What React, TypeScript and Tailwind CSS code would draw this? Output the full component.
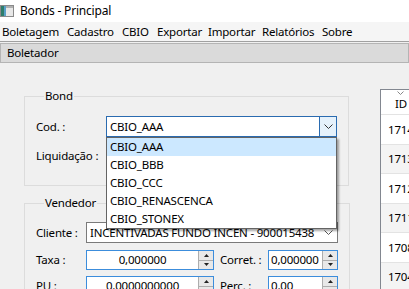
import React from "react";

const menus = [
  { label: "Boletagem", w: "w-[65px]" },
  { label: "Cadastro", w: "w-[55px]" },
  { label: "CBIO", w: "w-[35px]" },
  { label: "Exportar", w: "w-[51px]" },
  { label: "Importar", w: "w-[54px]" },
  { label: "Relatórios", w: "w-[60px]" },
  { label: "Sobre", w: "w-[40px]" },
];

const options = ["CBIO_AAA", "CBIO_BBB", "CBIO_CCC", "CBIO_RENASCENCA", "CBIO_STONEX"];

const rows = ["1714", "1713", "1712", "1711", "1708", "1704"];

const Chevron = ({ color = "#333" }: { color?: string }) => (
  <svg width="9" height="6" viewBox="0 0 9 6">
    <path d="M0.5 0.5 L4.5 4.5 L8.5 0.5" fill="none" stroke={color} strokeWidth="1" />
  </svg>
);

const Spinner = () => (
  <div className="flex flex-col w-[15px] h-full border-l border-[#adadad]">
    <div className="flex-1 flex items-center justify-center bg-[#e8e8e8] border-b border-[#adadad]">
      <svg width="5" height="3" viewBox="0 0 5 3">
        <path d="M0 3 L2.5 0 L5 3 Z" fill="#222" />
      </svg>
    </div>
    <div className="flex-1 flex items-center justify-center bg-[#e8e8e8]">
      <svg width="5" height="3" viewBox="0 0 5 3">
        <path d="M0 0 L2.5 3 L5 0 Z" fill="#222" />
      </svg>
    </div>
  </div>
);

const NumInput = ({ value, w, align }: { value: string; w: string; align: string }) => (
  <div className={`flex h-[20px] shrink-0 ${w} bg-white border border-[#3c8ddc]`}>
    <div className={`flex-1 flex items-center px-[2px] whitespace-nowrap overflow-hidden ${align}`}>{value}</div>
    <Spinner />
  </div>
);

export default function App() {
  return (
    <div
      className="relative w-[409px] h-[289px] overflow-hidden bg-[#f0f0f0] text-[11.5px] tracking-[-0.2px] text-black leading-[16px]"
      style={{ fontFamily: '"Noto Sans", "Open Sans", sans-serif' }}
    >
      {/* title bar */}
      <div className="h-[22px] bg-white flex items-center">
        <svg width="14" height="12" viewBox="0 0 14 12" className="mr-[6px]">
          <rect x="0.5" y="0.5" width="13" height="11" fill="#e8e8e8" stroke="#8a8a8a" />
          <rect x="1" y="1" width="3" height="10" fill="#2e7d6b" />
          <rect x="4" y="1" width="2" height="10" fill="#5aa0c8" />
          <rect x="6" y="1" width="7" height="2" fill="#b0b0b0" />
        </svg>
        <span className="text-[12px]">Bonds - Principal</span>
      </div>

      {/* menu bar */}
      <div className="h-[19px] flex items-center pl-[2px] bg-[#f5f5f5]">
        {menus.map((m) => (
          <div key={m.label} className={`${m.w} shrink-0 whitespace-nowrap`}>
            {m.label}
          </div>
        ))}
      </div>
      <div className="h-[2px] border-t border-[#a0a0a0] bg-[#f0f0f0]" />

      {/* tool strip */}
      <div className="h-[20px] bg-[#dadada] border border-[#b4b4b4] flex items-center pl-[6px]">
        Boletador
      </div>

      {/* body */}
      <div className="flex pl-[24px]">
        <div className="w-[325px] shrink-0 flex flex-col">
          <fieldset className="mt-[25px] h-[98px] border border-[#dcdcdc] pl-[11px] pr-[11px]">
            <legend className="ml-[8px] px-[1px]">Bond</legend>
            <div className="mt-[12px] flex items-center h-[21px]">
              <div className="w-[70px]">Cod. :</div>
              <div className="flex-1 h-[21px] flex bg-white border border-[#2a6bb0]">
                <div className="flex-1 flex items-center pl-[3px]">CBIO_AAA</div>
                <div className="w-[17px] flex items-center justify-center bg-[#e5f1fb] border-l border-[#2a6bb0]">
                  <Chevron />
                </div>
              </div>
            </div>
            <div className="mt-[8px] flex items-center h-[21px]">
              <div className="w-[70px]">Liquidação :</div>
            </div>
          </fieldset>

          <fieldset className="mt-[9px] border border-[#dcdcdc] pl-[11px] pr-[11px] pb-[10px]">
            <legend className="ml-[8px] px-[1px]">Vendedor</legend>
            <div className="mt-[11px] flex items-center h-[21px]">
              <div className="w-[50px] shrink-0">Cliente :</div>
              <div className="flex-1 h-[21px] flex items-center bg-white border border-[#7a7a7a] pl-[3px] pr-[4px]">
                <div className="flex-1 whitespace-nowrap overflow-hidden">
                  INCENTIVADAS FUNDO INCEN - 900015438
                </div>
                <Chevron color="#555" />
              </div>
            </div>
            <div className="mt-[7px] flex items-center">
              <div className="w-[50px] shrink-0">Taxa :</div>
              <NumInput value="0,000000" w="w-[128px]" align="justify-center" />
              <div className="w-[54px] shrink-0 pl-[6px] whitespace-nowrap">Corret. :</div>
              <NumInput value="0,000000" w="w-[70px]" align="justify-start" />
            </div>
            <div className="mt-[6px] flex items-center">
              <div className="w-[50px] shrink-0">PU :</div>
              <NumInput value="0,0000000000" w="w-[128px]" align="justify-center" />
              <div className="w-[54px] shrink-0 pl-[6px] whitespace-nowrap">Perc. :</div>
              <NumInput value="0,00" w="w-[70px]" align="justify-start" />
            </div>
          </fieldset>
        </div>

        {/* grid */}
        <div className="ml-[31px] mt-[26px] flex-1 h-[220px] bg-white border-l border-t border-[#828790] flex flex-col">
          <div className="h-[24px] shrink-0 flex flex-col items-start pl-[14px]">
            <svg width="7" height="4" viewBox="0 0 7 4" className="ml-[2px] mt-[1px]">
              <path d="M0.5 0.5 L3.5 3.5 L6.5 0.5" fill="none" stroke="#888" strokeWidth="1" />
            </svg>
            <div className="leading-[14px] mt-[2px]">ID</div>
          </div>
          {rows.map((r, i) => (
            <div
              key={r}
              className={`${i % 2 === 1 ? "h-[29px] bg-[#f4f4f4]" : "h-[30px] bg-white"} shrink-0 flex items-center pl-[7px] border-t border-[#e3e3e3]`}
            >
              {r}
            </div>
          ))}
        </div>
      </div>

      {/* open dropdown list */}
      <div className="absolute left-[106px] top-[137px] w-[231px] bg-white border border-[#646464] shadow-[2px_2px_2px_rgba(0,0,0,0.35)]">
        {options.map((o, i) => (
          <div
            key={o}
            className={`h-[18px] flex items-center pl-[3px] ${i === 0 ? "bg-[#cce8ff]" : ""}`}
          >
            {o}
          </div>
        ))}
      </div>
    </div>
  );
}
